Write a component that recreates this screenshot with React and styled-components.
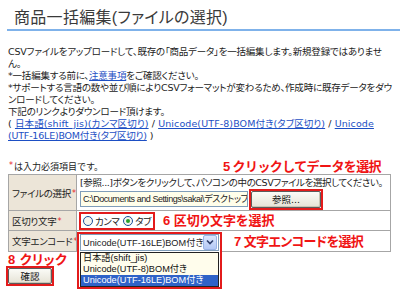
import React from 'react';
import styled, { createGlobalStyle } from 'styled-components';

const TITLE_FONT = `'Liberation Sans', 'Noto Sans CJK JP', sans-serif`;
const BODY_FONT = `'DejaVu Sans', 'Noto Sans CJK JP', sans-serif`;
const CONTROL_FONT = `'Liberation Sans', 'Noto Sans CJK JP', sans-serif`;

const GlobalStyle = createGlobalStyle`
  html, body {
    margin: 0;
    padding: 0;
    background: #fff;
  }
  body {
    width: 400px;
    height: 300px;
    overflow: hidden;
    font-family: ${BODY_FONT};
    color: #222;
    font-feature-settings: 'palt';
  }
`;

const Page = styled.div`
  padding-top: 7px;
`;

const Title = styled.h2`
  margin: 0 0 0 7px;
  padding-left: 7px;
  font-family: ${TITLE_FONT};
  font-size: 16px;
  font-weight: normal;
  line-height: 22px;
  color: #3a3a3a;
  letter-spacing: 0.3px;
  border-bottom: 2px solid #7fb2ea;
`;

const Intro = styled.div`
  margin: 15px 0 0 8px;
  font-size: 9.5px;
  color: #222;
`;

const Line = styled.div`
  height: 12px;
  line-height: 12px;
  white-space: nowrap;
  letter-spacing: ${({ $ls }) => ($ls == null ? -0.2 : $ls)}px;
`;

const Link = styled.a`
  color: #1d4fc4;
  text-decoration: underline;
`;

const NoteRow = styled.div`
  display: flex;
  align-items: center;
  width: 373px;
  height: 16px;
  margin: 16px 0 0 8px;
  font-size: 9px;
  font-feature-settings: normal;
  white-space: nowrap;
`;

const Req = styled.span`
  color: #e8262a;
  font-size: 8px;
  margin: 0 1px;
  position: relative;
  top: -1px;
`;

const Callout = styled.span`
  color: #f01414;
  font-family: ${TITLE_FONT};
  font-weight: bold;
  font-size: 13px;
  line-height: 13px;
  white-space: nowrap;
  letter-spacing: ${({ $ls }) => $ls || 0}px;
  margin-left: ${({ $gap }) => $gap || 0}px;
`;

const PushRight = styled(Callout)`
  margin-left: auto;
`;

const FormTable = styled.table`
  margin-left: 8px;
  width: 383px;
  table-layout: fixed;
  border-collapse: collapse;
  font-size: 9.5px;
  td {
    border: 1px solid #a6a6a6;
    vertical-align: middle;
  }
`;

const Row = styled.tr`
  height: ${({ $h }) => $h}px;
`;

const Label = styled.td`
  background: #ece5d8;
  padding: 0 0 0 3px;
  white-space: nowrap;
  overflow: hidden;
  letter-spacing: -0.3px;
`;

const Value = styled.td`
  padding: 0 0 0 ${({ $pad }) => $pad}px;
  background: #fff;
`;

const Hint = styled.div`
  white-space: nowrap;
  overflow: hidden;
  line-height: 13px;
  letter-spacing: -0.4px;
`;

const FileRow = styled.div`
  display: flex;
  align-items: center;
`;

const PathBox = styled.div`
  width: 164px;
  height: 14px;
  border: 1px solid #7f9db9;
  background: #fffeea;
  overflow: hidden;
  white-space: nowrap;
  padding-left: 2px;
  line-height: 14px;
  font-family: ${CONTROL_FONT};
  font-size: 9px;
  letter-spacing: -0.45px;
`;

const RedFrame = styled.div`
  border: 2px solid #e31b1b;
  display: flex;
  align-items: center;
  margin-left: ${({ $gap }) => $gap || 0}px;
`;

const XpButton = styled.div`
  display: flex;
  align-items: center;
  justify-content: center;
  width: ${({ $w }) => $w}px;
  height: ${({ $h }) => $h}px;
  background: linear-gradient(#fbfbf7, #e6e3d6);
  border: 1px solid #5b5b5b;
  border-radius: 2px;
  box-shadow: inset -1px -1px 0 #c9c5b5;
  font-size: 9.5px;
  color: #111;
`;

const RadioRow = styled.div`
  display: flex;
  align-items: center;
  gap: 4px;
  height: 14px;
  padding: 0 2px;
  letter-spacing: -0.5px;
`;

const RadioItem = styled.label`
  display: flex;
  align-items: center;
  gap: 2px;
`;

const RadioDot = styled.span`
  width: 8px;
  height: 8px;
  border-radius: 50%;
  border: 1px solid #1c4f9a;
  background: #f4f4ee;
  display: flex;
  align-items: center;
  justify-content: center;
  &::after {
    content: '';
    width: 4px;
    height: 4px;
    border-radius: 50%;
    background: ${({ $on }) => ($on ? '#2aa02a' : 'transparent')};
  }
`;

const InlineRow = styled.div`
  display: flex;
  align-items: center;
`;

const Picker = styled.div`
  position: relative;
  width: 139px;
  border: 2px solid #e31b1b;
  border-bottom: none;
  padding: 0 1px;
  font-family: ${CONTROL_FONT};
  font-size: 9.2px;
`;

const SelectBox = styled.div`
  display: flex;
  align-items: center;
  height: 15px;
  border: 1px solid #7f9db9;
  background: #fff;
  padding-left: 2px;
  white-space: nowrap;
`;

const SelectText = styled.span`
  flex: 1;
  overflow: hidden;
`;

const ArrowBtn = styled.span`
  flex: none;
  width: 12px;
  height: 13px;
  margin-right: 1px;
  background: linear-gradient(#dce7fd, #b3c8f5);
  border: 1px solid #9bb4e6;
  border-radius: 2px;
  display: flex;
  align-items: center;
  justify-content: center;
`;

const DropList = styled.div`
  position: absolute;
  top: 100%;
  left: -2px;
  right: -2px;
  border: 2px solid #e31b1b;
  border-top: none;
  background: #fff;
  padding: 1px 1px 0;
  z-index: 2;
`;

const ListInner = styled.div`
  border: 1px solid #222;
  background: #fffdec;
`;

const Option = styled.div`
  height: 11px;
  line-height: 11px;
  padding-left: 2px;
  white-space: nowrap;
  overflow: hidden;
  background: ${({ $sel }) => ($sel ? '#2f63c8' : 'transparent')};
  color: ${({ $sel }) => ($sel ? '#fff' : '#111')};
`;

const Footer = styled.div`
  margin: 1px 0 0 8px;
  display: flex;
  flex-direction: column;
  align-items: flex-start;
`;

const ConfirmFrame = styled.div`
  display: flex;
  margin: 0 0 0 -2px;
  border: 2px solid #e31b1b;
`;

const Chevron = () => (
  <svg width="8" height="6" viewBox="0 0 8 6">
    <path d="M1 1.5 L4 4.5 L7 1.5" fill="none" stroke="#2d3e6c" strokeWidth="1.6" />
  </svg>
);

export default function App() {
  return (
    <Page>
      <GlobalStyle />
      <Title>商品一括編集(ファイルの選択)</Title>

      <Intro>
        <Line>CSVファイルをアップロードして、既存の「商品データ」を一括編集します。新規登録ではありませ</Line>
        <Line>ん。</Line>
        <Line>*一括編集する前に、<Link>注意事項</Link>をご確認ください。</Line>
        <Line>*サポートする言語の数や並び順によりCSVフォーマットが変わるため、作成時に既存データをダウ</Line>
        <Line>ンロードしてください。</Line>
        <Line>下記のリンクよりダウンロード頂けます。</Line>
        <Line $ls={0.1}>
          ( <Link>日本語(shift_jis)(カンマ区切り)</Link> / <Link>Unicode(UTF-8)BOM付き(タブ区切り)</Link> / <Link>Unicode</Link>
        </Line>
        <Line>
          <Link>(UTF-16LE)BOM付き(タブ区切り)</Link> )
        </Line>
      </Intro>

      <NoteRow>
        <Req>*</Req>は入力必須項目です。
        <PushRight $ls={-0.6}>5 クリックしてデータを選択</PushRight>
      </NoteRow>

      <FormTable>
        <colgroup>
          <col style={{ width: 68 }} />
          <col />
        </colgroup>
        <tbody>
          <Row $h={36}>
            <Label>ファイルの選択<Req>*</Req></Label>
            <Value $pad={3}>
              <Hint>[参照...]ボタンをクリックして、パソコンの中のCSVファイルを選択してください。</Hint>
              <FileRow>
                <PathBox>C:\Documents and Settings\sakai\デスクトップ\g</PathBox>
                <RedFrame $gap={1}>
                  <XpButton $w={68} $h={15}>参照...</XpButton>
                </RedFrame>
              </FileRow>
            </Value>
          </Row>
          <Row $h={20}>
            <Label>区切り文字<Req>*</Req></Label>
            <Value $pad={2}>
              <InlineRow>
                <RedFrame>
                  <RadioRow>
                    <RadioItem><RadioDot />カンマ</RadioItem>
                    <RadioItem><RadioDot $on />タブ</RadioItem>
                  </RadioRow>
                </RedFrame>
                <Callout $gap={8}>6 区切り文字を選択</Callout>
              </InlineRow>
            </Value>
          </Row>
          <Row $h={21}>
            <Label>文字エンコード<Req>*</Req></Label>
            <Value $pad={0}>
              <InlineRow>
                <Picker>
                  <SelectBox>
                    <SelectText>Unicode(UTF-16LE)BOM付き</SelectText>
                    <ArrowBtn><Chevron /></ArrowBtn>
                  </SelectBox>
                  <DropList>
                    <ListInner>
                      <Option>日本語(shift_jis)</Option>
                      <Option>Unicode(UTF-8)BOM付き</Option>
                      <Option $sel>Unicode(UTF-16LE)BOM付き</Option>
                    </ListInner>
                  </DropList>
                </Picker>
                <Callout $gap={12} $ls={-0.6}>7 文字エンコードを選択</Callout>
              </InlineRow>
            </Value>
          </Row>
        </tbody>
      </FormTable>

      <Footer>
        <Callout $ls={0.5}>8 クリック</Callout>
        <ConfirmFrame>
          <XpButton $w={42} $h={14}>確認</XpButton>
        </ConfirmFrame>
      </Footer>
    </Page>
  );
}
